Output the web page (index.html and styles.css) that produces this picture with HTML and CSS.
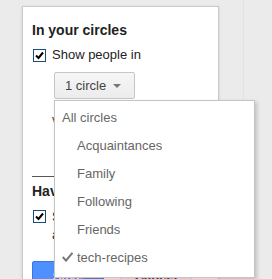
FILE: index.html
```html
<!DOCTYPE html>
<html lang="en">
<head>
  <meta charset="UTF-8">
  <title>Circles settings</title>
  <link rel="stylesheet" href="styles.css">
</head>

<body>

  <div class="page">
    <div class="main">
      <div class="panel">
        <h3 class="panel-title">In your circles</h3>

        <div class="check-row">
          <span class="box">
            <svg width="11" height="11" viewBox="0 0 11 11"><path d="M2 5.5 L4.5 8 L9 2.5" fill="none" stroke="#000" stroke-width="2"/></svg>
          </span>
          <span class="check-text">Show people in</span>
        </div>

        <div class="circle-btn">
          <span>1 circle</span>
          <span class="arrow"></span>
        </div>

        <div class="visible-note">visible to anyone on the web</div>

        <hr class="divider">

        <h3 class="panel-title">Have you in circles</h3>

        <div class="check-row tall">
          <span class="box">
            <svg width="11" height="11" viewBox="0 0 11 11"><path d="M2 5.5 L4.5 8 L9 2.5" fill="none" stroke="#000" stroke-width="2"/></svg>
          </span>
          <span class="check-text">Show people who have added you to circles</span>
        </div>

        <div class="actions">
          <span class="btn btn-blue">Save</span>
          <span class="btn btn-gray">Cancel</span>
        </div>
      </div>
    </div>
    <div class="side"></div>
  </div>

  <!-- menu opened from the "1 circle" button -->
  <ul class="menu">
    <li class="menu-item">All circles</li>
    <li class="menu-item sub">Acquaintances</li>
    <li class="menu-item sub">Family</li>
    <li class="menu-item sub">Following</li>
    <li class="menu-item sub">Friends</li>
    <li class="menu-item checked">
      <svg width="11" height="10" viewBox="0 0 11 10"><path d="M0.8 5 L4 8.6 L10.4 0.8" fill="none" stroke="#777" stroke-width="2"/></svg>
      <span>tech-recipes</span>
    </li>
  </ul>

</body>
</html>
```

FILE: styles.css
```css
body {
  margin: 0;
  font-family: 'Liberation Sans', Arial, sans-serif;
  font-size: 13px;
  color: #222;
  background-color: #ebebeb;
  overflow: hidden;
}

.page {
  display: flex;
  min-height: 279px;
}

.main {
  width: 243px;
}

.side {
  flex: 1;
  border-left: 1px solid #e2e2e2;
}

.panel {
  margin: 6px 0 0 22px;
  width: 197px;
  height: 300px;
  box-sizing: border-box;
  padding: 15px 9px 0 9px;
  background: white;
  border: 1px solid #cacaca;
  box-shadow: 0 1px 3px rgba(0, 0, 0, 0.12);
}

.panel-title {
  margin: 0;
  font-size: 14px;
  line-height: 16px;
  font-weight: bold;
  color: #222;
}

.check-row {
  display: flex;
  align-items: center;
  gap: 6px;
  margin-top: 9px;
  line-height: 16px;
}

.check-row.tall {
  align-items: flex-start;
  line-height: 18px;
}

.check-row.tall .box {
  margin-top: 2px;
}

.box {
  display: flex;
  align-items: center;
  justify-content: center;
  flex: none;
  width: 13px;
  height: 13px;
  box-sizing: border-box;
  margin-left: 1px;
  border: 1px solid #1d4d72;
  background: white;
}

.circle-btn {
  display: inline-flex;
  align-items: center;
  gap: 7px;
  margin: 9px 0 0 22px;
  height: 27px;
  box-sizing: border-box;
  padding: 0 13px 0 10px;
  border: 1px solid #c6c6c6;
  border-radius: 2px;
  background: linear-gradient(#f6f6f6, #ececec);
  color: #444;
}

.arrow {
  width: 0;
  height: 0;
  border-left: 4px solid transparent;
  border-right: 4px solid transparent;
  border-top: 4px solid #777;
}

.visible-note {
  margin: 13px 0 0 20px;
  line-height: 16px;
  color: #444;
  white-space: nowrap;
}

.divider {
  margin: 48px 0 0 0;
  border: none;
  border-top: 1px solid #555;
}

.divider + .panel-title {
  margin-top: 6px;
}

.actions {
  display: flex;
  gap: 16px;
  margin-top: 17px;
}

.btn {
  width: 72px;
  height: 32px;
  line-height: 30px;
  box-sizing: border-box;
  text-align: center;
  font-weight: bold;
  border-radius: 2px;
}

.btn-blue {
  background: #4d90fe;
  border: 1px solid #3079ed;
  color: white;
}

.btn-gray {
  background: #f3f3f3;
  border: 1px solid #dcdcdc;
  color: #444;
}

.menu {
  position: absolute;
  left: 54px;
  top: 100px;
  width: 201px;
  box-sizing: border-box;
  margin: 0;
  padding: 2px 0 6px 0;
  list-style: none;
  background: white;
  border: 1px solid #c4c4c4;
  box-shadow: 2px 2px 4px rgba(0, 0, 0, 0.18);
}

.menu-item {
  display: flex;
  align-items: center;
  gap: 4px;
  height: 28px;
  padding-left: 7px;
  color: #666;
}

.menu-item.sub {
  padding-left: 22px;
}
```
